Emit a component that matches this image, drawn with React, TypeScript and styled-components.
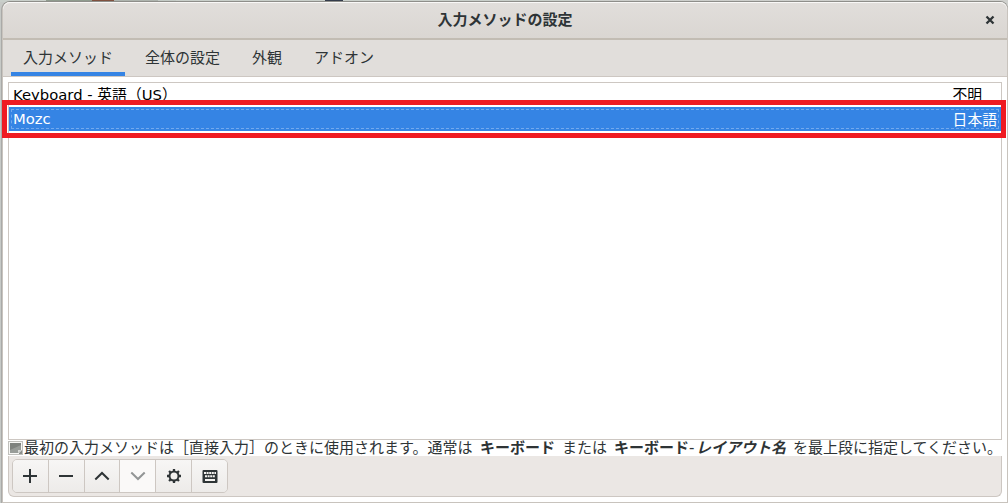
import React from "react";
import styled, { createGlobalStyle, css } from "styled-components";

const methods = [
  { name: "Keyboard - 英語（US）", language: "不明" },
  { name: "Mozc", language: "日本語", selected: true },
];

const tabs = [
  { label: "入力メソッド", width: 114, active: true },
  { label: "全体の設定", width: 99 },
  { label: "外観", width: 54 },
  { label: "アドオン", width: 84 },
];

export default function App() {
  return (
    <Desktop>
      <GlobalStyle />
      <Backdrop>
        <Scrap $left={46} $width={46} $color="#8f9b8e" />
        <Scrap $left={92} $width={22} $color="#80513f" />
        <Scrap $left={114} $width={44} $color="#aeb4ae" />
        <Scrap $left={158} $width={18} $color="#c3cac5" />
        <Scrap $left={325} $width={18} $color="#343c4b" />
      </Backdrop>
      <Window>
        <TitleBar>
          <Title>入力メソッドの設定</Title>
          <CloseButton aria-label="閉じる">
            <svg width="10" height="10" viewBox="0 0 10 10">
              <path d="M1.5 1.5l7 7M8.5 1.5l-7 7" stroke="#2e3436" strokeWidth="2.3" />
            </svg>
          </CloseButton>
        </TitleBar>
        <TabBar>
          {tabs.map((tab) => (
            <Tab key={tab.label} $active={tab.active} $width={tab.width}>
              {tab.label}
            </Tab>
          ))}
        </TabBar>
        <Content>
          <List>
            {methods.map((method) => (
              <Row key={method.name} $selected={method.selected}>
                <span>{method.name}</span>
                <span>{method.language}</span>
              </Row>
            ))}
            <Highlight />
          </List>
          <Hint>
            <InfoIcon />
            <HintText $width={456}>
              最初の入力メソッドは［直接入力］のときに使用されます。通常は
            </HintText>
            <HintText $width={82} $bold>キーボード</HintText>
            <HintText $width={52}>または</HintText>
            <HintText $width={75} $bold>キーボード</HintText>
            <HintText $width={7}>-</HintText>
            <HintText $width={97} $bold $italic>レイアウト名</HintText>
            <HintText $width={210}>を最上段に指定してください。</HintText>
          </Hint>
          <ToolBar>
            <ButtonGroup>
              <ToolButton aria-label="追加">
                <Glyph>
                  <path d="M8 1v14M1 8h14" />
                </Glyph>
              </ToolButton>
              <ToolButton aria-label="削除">
                <Glyph>
                  <path d="M1 8h14" />
                </Glyph>
              </ToolButton>
              <ToolButton aria-label="上へ">
                <Glyph>
                  <path d="M1.3 11.5L8 5l6.7 6.5" />
                </Glyph>
              </ToolButton>
              <ToolButton aria-label="下へ" disabled>
                <Glyph>
                  <path d="M1.3 4.5L8 11l6.7-6.5" />
                </Glyph>
              </ToolButton>
              <ToolButton aria-label="設定">
                <Glyph>
                  <circle cx="8" cy="8" r="4.5" />
                  <path
                    d="M8 1v2.4M8 12.6V15M1 8h2.4M12.6 8H15M3.05 3.05l1.7 1.7M11.25 11.25l1.7 1.7M3.05 12.95l1.7-1.7M11.25 4.75l1.7-1.7"
                    strokeWidth="2.3"
                  />
                </Glyph>
              </ToolButton>
              <ToolButton aria-label="キーボードレイアウト">
                <Glyph>
                  <rect x="0.5" y="2" width="15" height="13" rx="1" fill="#2e3436" stroke="none" />
                  <path d="M2 5h12" stroke="#f4f2f0" strokeDasharray="2 .6" />
                  <path d="M3 8.2h10" stroke="#f4f2f0" strokeDasharray="2 .6" />
                  <path d="M3 12h10" stroke="#f4f2f0" />
                </Glyph>
              </ToolButton>
            </ButtonGroup>
          </ToolBar>
        </Content>
      </Window>
    </Desktop>
  );
}

function Glyph({ children }: { children: React.ReactNode }) {
  return (
    <svg width="16" height="16" viewBox="0 0 16 16" fill="none" stroke="currentColor" strokeWidth="2">
      {children}
    </svg>
  );
}

function InfoIcon() {
  return (
    <svg width="16" height="14" viewBox="0 0 16 14">
      <rect x="0.5" y="0.5" width="14" height="13" fill="#f7f7f5" stroke="#c0c0bc" />
      <path d="M2 2h11v7l-3 3H2z" fill="#7e827e" />
      <path d="M2 12V9l11-5v5l-3 3z" fill="#989c98" />
      <path d="M10 12V9h3.5z" fill="#d8dad7" />
      <path d="M11 12l3-3v4h-3z" fill="#8d908c" />
    </svg>
  );
}

const GlobalStyle = createGlobalStyle`
  * {
    box-sizing: border-box;
  }

  body {
    margin: 0;
    overflow: hidden;
    font-family: "DejaVu Sans", "Noto Sans CJK JP", sans-serif;
    font-size: 15px;
    color: #2e3436;
  }
`;

const Desktop = styled.div`
  position: relative;
  height: 503px;
  padding: 2px 0 0 2px;
  background: linear-gradient(90deg, #c6c9c6, #d0d1ce);
`;

const Backdrop = styled.div`
  position: absolute;
  top: 0;
  left: 0;
  width: 596px;
  height: 2px;
  background: #c9cfca;
`;

const Scrap = styled.span<{ $left: number; $width: number; $color: string }>`
  position: absolute;
  top: 0;
  left: ${(p) => p.$left}px;
  width: ${(p) => p.$width}px;
  height: 2px;
  background: ${(p) => p.$color};
`;

const Window = styled.div`
  position: relative;
  display: flex;
  flex-direction: column;
  height: 501px;
  border: 1px solid #c8c3bd;
  border-top: 0;
  border-radius: 8px 8px 0 0;
  background: #fff;
  box-shadow: 0 -1px 0 #8e8e8a, -1px 0 0 #aaaaa8;
`;

const TitleBar = styled.header`
  display: grid;
  grid-template-columns: 36px 1fr 36px;
  align-items: center;
  height: 38px;
  flex: none;
  border-bottom: 2px solid #c2bcb3;
  border-radius: 7px 7px 0 0;
  background: linear-gradient(#e1dedb, #dad6d2);
  box-shadow: inset 0 1px #f9f8f7;
`;

const Title = styled.h1`
  grid-column: 2;
  margin: 0;
  font-size: 15px;
  line-height: 22px;
  font-weight: bold;
  text-align: center;
`;

const CloseButton = styled.button`
  display: flex;
  justify-content: center;
  align-items: center;
  padding: 0 0 0 2px;
  border: 0;
  background: none;
`;

const TabBar = styled.nav`
  display: flex;
  gap: 8px;
  height: 37px;
  flex: none;
  padding-left: 8px;
  border-bottom: 1px solid #cdc7c2;
  background: #e1dedb;
`;

const Tab = styled.div<{ $active?: boolean; $width: number }>`
  display: flex;
  justify-content: center;
  align-items: center;
  width: ${(p) => p.$width}px;
  white-space: nowrap;
  border-bottom: 4px solid ${(p) => (p.$active ? "#3584e4" : "transparent")};
`;

const Content = styled.main`
  display: flex;
  flex-direction: column;
  flex: 1;
  padding: 5px;
`;

const List = styled.div`
  position: relative;
  height: 358px;
  flex: none;
  border: 1px solid #cdc7c2;
  color: #000;
`;

const Row = styled.div<{ $selected?: boolean }>`
  display: flex;
  justify-content: space-between;
  align-items: center;
  height: 24px;
  padding: 0 19px 3px 4px;
  font-size: 14.8px;
  white-space: nowrap;

  ${(p) =>
    p.$selected &&
    css`
      padding: 0 4px 2px;
      color: #fff;
      background: #3584e4;
      outline: 1px dashed #72a9ed;
      outline-offset: -3px;
    `}
`;

const Highlight = styled.div`
  position: absolute;
  top: 17px;
  left: -7px;
  right: -5px;
  height: 38px;
  border: 5px solid #ef1b22;
`;

const Hint = styled.div`
  display: flex;
  align-items: center;
  height: 16px;
  flex: none;

  svg {
    flex: none;
  }
`;

const HintText = styled.span<{ $width: number; $bold?: boolean; $italic?: boolean }>`
  width: ${(p) => p.$width}px;
  flex: none;
  line-height: 16px;
  white-space: nowrap;
  font-weight: ${(p) => (p.$bold ? 700 : 400)};
  font-style: ${(p) => (p.$italic ? "italic" : "normal")};
`;

const ToolBar = styled.div`
  height: 41px;
  flex: none;
  padding: 3px;
  border: 1px solid #cdc7c2;
  border-top: 0;
  border-radius: 0 0 6px 6px;
  background: #ebe7e4;
`;

const ButtonGroup = styled.div`
  display: flex;
  width: 216px;
  height: 34px;
  border: 1px solid #cdc7c2;
  border-radius: 5px;
  overflow: hidden;
`;

const ToolButton = styled.button`
  display: flex;
  justify-content: center;
  align-items: center;
  flex: 1;
  padding: 0;
  border: 0;
  border-left: 1px solid #cdc7c2;
  color: #2e3436;
  background: linear-gradient(#f7f6f5, #edebe9);

  &:first-child {
    border-left: 0;
  }

  &:disabled {
    color: #929595;
    background: #faf9f8;
  }
`;
